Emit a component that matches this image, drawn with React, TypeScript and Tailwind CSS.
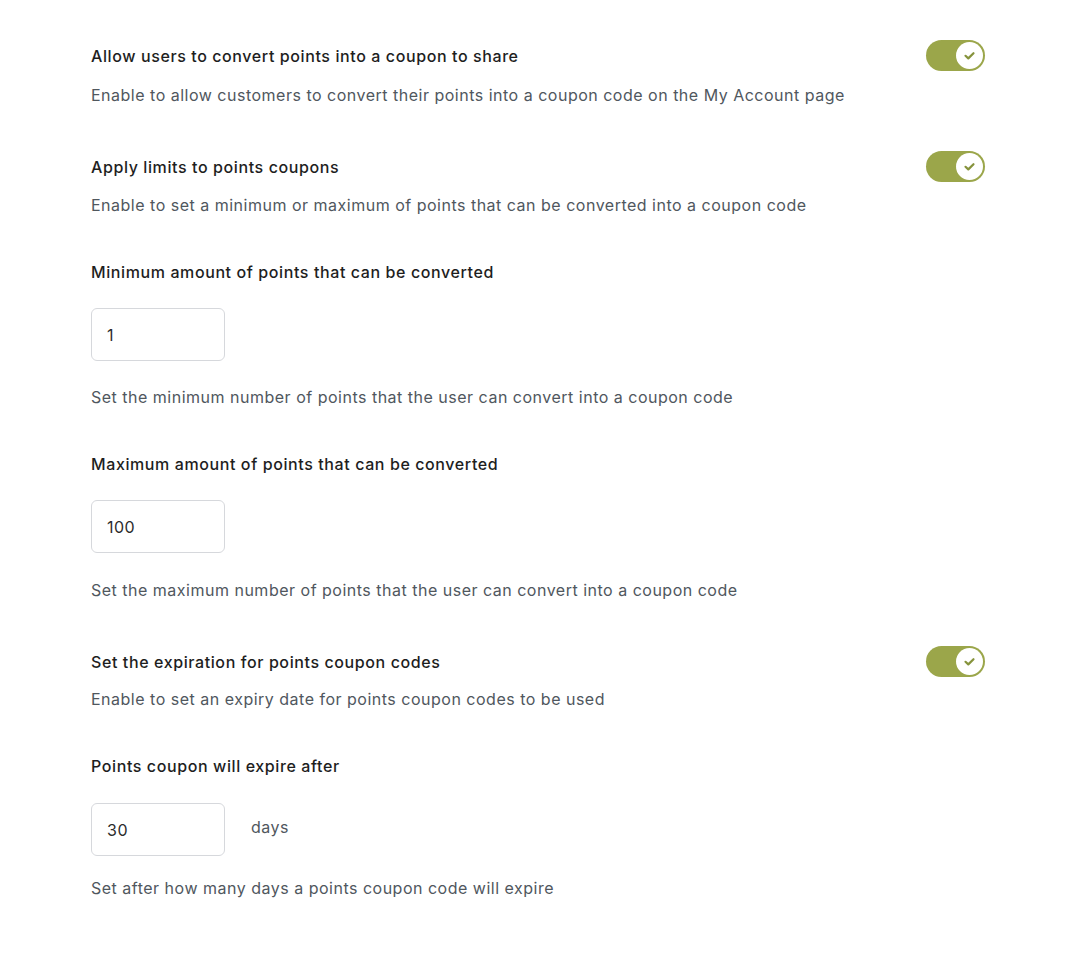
import React, { useState } from "react";

interface ToggleProps {
  on: boolean;
  onChange: () => void;
}

const Toggle = ({ on, onChange }: ToggleProps) => {
  return (
    <button
      onClick={onChange}
      className={`flex items-center w-[59px] h-[31px] rounded-full px-[2px] shrink-0 ${
        on ? "bg-[#9ba64a] justify-end" : "bg-[#d1d5db] justify-start"
      }`}
    >
      <span className="flex items-center justify-center w-[27px] h-[27px] rounded-full bg-white">
        {on && (
          <svg width="13" height="13" viewBox="0 0 13 13" fill="none">
            <path
              d="M2.5 6.8l2.8 2.6 5.2-5.2"
              stroke="#86933c"
              strokeWidth="2.2"
              strokeLinecap="round"
              strokeLinejoin="round"
            />
          </svg>
        )}
      </span>
    </button>
  );
};

const NumberField = ({ value }: { value: string }) => (
  <input
    type="text"
    defaultValue={value}
    className="w-[134px] h-[53px] rounded-md border border-[#d6d8dc] bg-white pl-[15px] text-base tracking-[0.5px] text-[#2c2c2c] outline-none"
  />
);

const App = () => {
  const [share, setShare] = useState(true);
  const [limits, setLimits] = useState(true);
  const [expiry, setExpiry] = useState(true);

  const title = "font-medium text-[#1e1e1e] tracking-[0.6px]";
  const desc = "text-[#50575e] tracking-[0.5px]";

  return (
    <div
      className="min-h-screen bg-white pl-[91px] pr-[101px] pt-[40px] text-base leading-6"
      style={{ fontFamily: "Inter, 'Noto Sans', sans-serif" }}
    >
      <div className="flex items-center justify-between">
        <h3 className={title}>Allow users to convert points into a coupon to share</h3>
        <Toggle on={share} onChange={() => setShare(!share)} />
      </div>
      <p className={`mt-[12px] ${desc}`}>
        Enable to allow customers to convert their points into a coupon code on the My Account page
      </p>

      <div className="mt-[44px] flex items-center justify-between">
        <h3 className={title}>Apply limits to points coupons</h3>
        <Toggle on={limits} onChange={() => setLimits(!limits)} />
      </div>
      <p className={`mt-[11px] ${desc}`}>
        Enable to set a minimum or maximum of points that can be converted into a coupon code
      </p>

      <h3 className={`mt-[43px] ${title}`}>Minimum amount of points that can be converted</h3>
      <div className="mt-[24px]">
        <NumberField value="1" />
      </div>
      <p className={`mt-[24px] ${desc}`}>
        Set the minimum number of points that the user can convert into a coupon code
      </p>

      <h3 className={`mt-[43px] ${title}`}>Maximum amount of points that can be converted</h3>
      <div className="mt-[24px]">
        <NumberField value="100" />
      </div>
      <p className={`mt-[25px] ${desc}`}>
        Set the maximum number of points that the user can convert into a coupon code
      </p>

      <div className="mt-[44px] flex items-center justify-between">
        <h3 className={title}>Set the expiration for points coupon codes</h3>
        <Toggle on={expiry} onChange={() => setExpiry(!expiry)} />
      </div>
      <p className={`mt-[10px] ${desc}`}>
        Enable to set an expiry date for points coupon codes to be used
      </p>

      <h3 className={`mt-[43px] ${title}`}>Points coupon will expire after</h3>
      <div className="mt-[25px] flex items-center gap-[26px]">
        <NumberField value="30" />
        <span className={`-mt-[5px] ${desc}`}>days</span>
      </div>
      <p className={`mt-[20px] ${desc}`}>
        Set after how many days a points coupon code will expire
      </p>
    </div>
  );
};

export default App;
